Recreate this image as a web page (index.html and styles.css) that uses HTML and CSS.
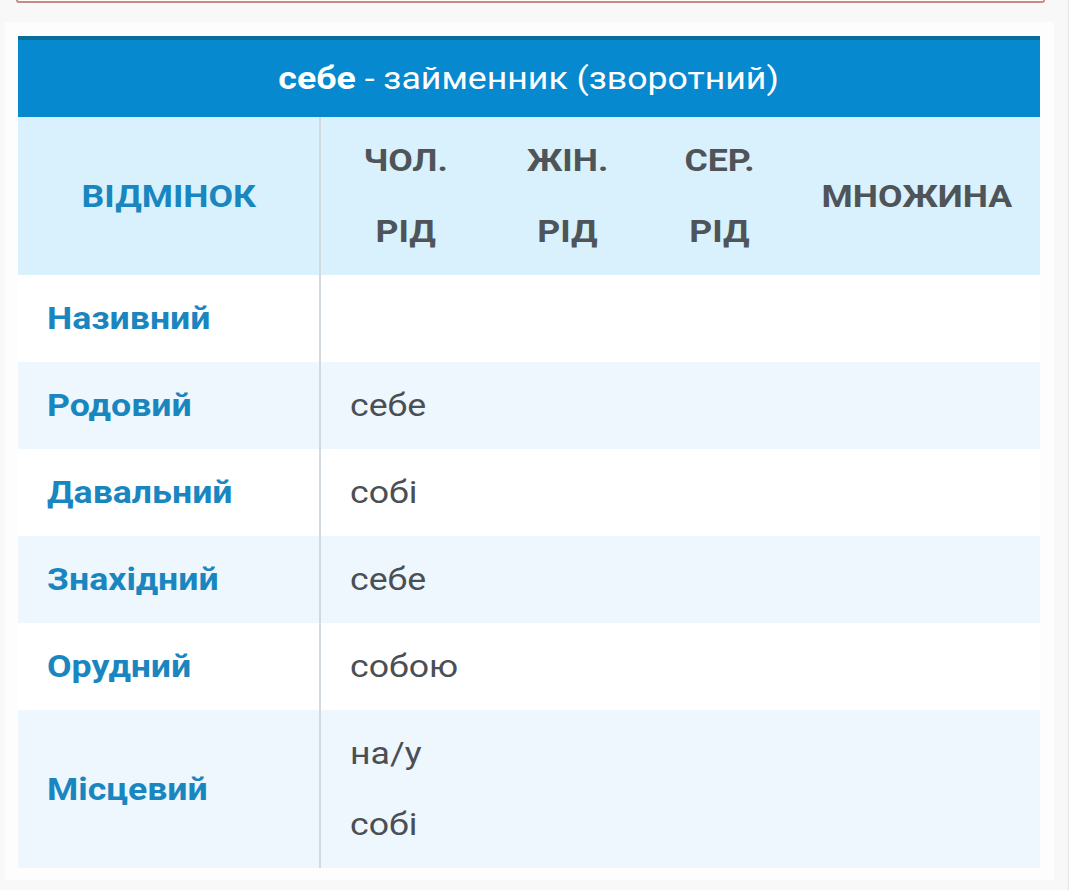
FILE: index.html
```html
<!DOCTYPE html>
<html lang="uk">
<head>
<meta charset="utf-8">
<link rel="stylesheet" href="styles.css">
</head>
<body>
<div class="card-edge"></div>
<div class="panel">
  <table class="decl">
    <colgroup>
      <col class="c1"><col class="c2"><col class="c3"><col class="c4"><col class="c5">
    </colgroup>
    <thead>
      <tr class="title-row">
        <th colspan="5" class="title"><span class="wide mid"><b>себе</b> - займенник (зворотний)</span></th>
      </tr>
      <tr class="head-row">
        <th class="case-head"><span class="wide mid">ВІДМІНОК</span></th>
        <th class="g"><span class="wide mid">ЧОЛ.<br>РІД</span></th>
        <th class="g"><span class="wide mid">ЖІН.<br>РІД</span></th>
        <th class="g"><span class="wide mid">СЕР.<br>РІД</span></th>
        <th class="g"><span class="wide mid">МНОЖИНА</span></th>
      </tr>
    </thead>
    <tbody>
      <tr><th class="case"><span class="wide">Називний</span></th><td colspan="4"></td></tr>
      <tr class="alt"><th class="case"><span class="wide">Родовий</span></th><td colspan="4"><span class="wide">себе</span></td></tr>
      <tr><th class="case"><span class="wide">Давальний</span></th><td colspan="4"><span class="wide">собі</span></td></tr>
      <tr class="alt"><th class="case"><span class="wide">Знахідний</span></th><td colspan="4"><span class="wide">себе</span></td></tr>
      <tr><th class="case"><span class="wide">Орудний</span></th><td colspan="4"><span class="wide">собою</span></td></tr>
      <tr class="alt"><th class="case"><span class="wide">Місцевий</span></th><td colspan="4"><span class="wide">на/у<br>собі</span></td></tr>
    </tbody>
  </table>
</div>
</body>
</html>
```

FILE: styles.css
```css
html, body {
  margin: 0;
  padding: 0;
  background: #f8f8f8;
  font-family: Roboto, "Noto Sans", "Liberation Sans", sans-serif;
}

body {
  width: 1069px;
  height: 890px;
  overflow: hidden;
  border-right: 1px solid #e6e6e6;
  box-sizing: border-box;
}

.card-edge {
  margin: 0 23px 0 16px;
  height: 1px;
  border: 2px solid #c98a7f;
  border-top: none;
  border-radius: 0 0 6px 6px;
  background: #fdfdfd;
}

.panel {
  margin: 19px 14px 0 5px;
  padding: 14px 12px 12px 13px;
  background: #fdfdfd;
}

.decl {
  border-collapse: collapse;
  table-layout: fixed;
  width: 1022px;
}

.c1 { width: 302px; }
.c2 { width: 170px; }
.c3 { width: 155px; }
.c4 { width: 148px; }
.c5 { width: 247px; }

.wide {
  display: inline-block;
  transform: scaleX(1.15);
  transform-origin: left center;
}

.wide.mid {
  transform-origin: center center;
}

.title {
  background: #0789cf;
  border-top: 4px solid #0a6c99;
  height: 77px;
  padding: 0;
  color: #ffffff;
  font-size: 31px;
  font-weight: 400;
  text-align: center;
  vertical-align: middle;
}

.title b {
  font-weight: 700;
}

.head-row th {
  background: #d9f1fc;
  padding: 8px 0;
  line-height: 71px;
  font-size: 31px;
  font-weight: 700;
  text-align: center;
  vertical-align: middle;
  color: #4f5459;
}

.head-row .case-head {
  color: #1a86bf;
  border-right: 2px solid #d2dadf;
}

tbody tr {
  background: #ffffff;
}

tbody tr.alt {
  background: #eef7fd;
}

tbody th, tbody td {
  padding: 8px 0 8px 29px;
  line-height: 71px;
  font-size: 31px;
  text-align: left;
  vertical-align: middle;
}

tbody th.case {
  color: #1a86bf;
  font-weight: 700;
  border-right: 2px solid #d2dadf;
}

tbody td {
  color: #4a4f55;
  font-weight: 400;
}
```
